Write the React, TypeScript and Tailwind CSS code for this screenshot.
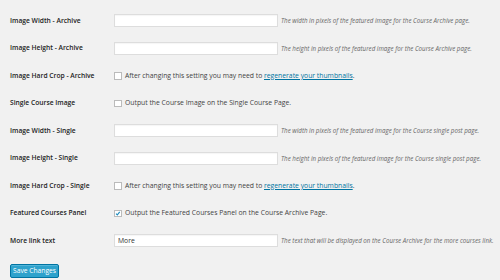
import { Fragment } from "react";

type Row =
    | { label: string; kind: "text"; value?: string; desc: string }
    | { label: string; kind: "check"; checked?: boolean; text: string; link?: boolean };

const rows: Row[] = [
    { label: "Image Width - Archive", kind: "text", desc: "The width in pixels of the featured image for the Course Archive page." },
    { label: "Image Height - Archive", kind: "text", desc: "The height in pixels of the featured image for the Course Archive page." },
    { label: "Image Hard Crop - Archive", kind: "check", text: "After changing this setting you may need to ", link: true },
    { label: "Single Course Image", kind: "check", text: "Output the Course Image on the Single Course Page." },
    { label: "Image Width - Single", kind: "text", desc: "The width in pixels of the featured image for the Course single post page." },
    { label: "Image Height - Single", kind: "text", desc: "The height in pixels of the featured image for the Course single post page." },
    { label: "Image Hard Crop - Single", kind: "check", text: "After changing this setting you may need to ", link: true },
    { label: "Featured Courses Panel", kind: "check", checked: true, text: "Output the Featured Courses Panel on the Course Archive Page." },
    { label: "More link text", kind: "text", value: "More", desc: "The text that will be displayed on the Course Archive for the more courses link." },
];

const App = () => {
    return (
        <div className="w-[500px] h-[280px] overflow-hidden bg-[#f1f1f1] pl-[10px] pt-[7px] font-['Open_Sans',sans-serif] text-[#444]">
            {rows.map((row) => (
                <div key={row.label} className="flex h-[27.5px] items-center">
                    <div className="w-[104px] shrink-0 text-[6.7px] font-semibold text-[#222]">{row.label}</div>
                    {row.kind === "text" ? (
                        <Fragment>
                            <div className="flex h-[13px] w-[164px] items-center border border-[#ddd] bg-white pl-[3px] text-[6.8px] text-[#333] shadow-[inset_0_1px_1px_rgba(0,0,0,0.04)]">
                                {row.value}
                            </div>
                            <span className="ml-[3px] text-[6.2px] italic text-[#666] whitespace-nowrap">{row.desc}</span>
                        </Fragment>
                    ) : (
                        <div className="flex items-center">
                            <div className="flex h-[7.5px] w-[7.5px] items-center justify-center border border-[#bbb] bg-white">
                                {row.checked && (
                                    <svg viewBox="0 0 10 10" className="h-[7px] w-[7px]">
                                        <path d="M1.8 5.2 L4.2 7.6 L8.6 2" fill="none" stroke="#1e8cbe" strokeWidth="2" />
                                    </svg>
                                )}
                            </div>
                            <span className="ml-[3.5px] text-[6.8px] text-[#444] whitespace-nowrap">
                                {row.text}
                                {row.link && (
                                    <>
                                        <a className="text-[#0074a2] underline">regenerate your thumbnails</a>.
                                    </>
                                )}
                            </span>
                        </div>
                    )}
                </div>
            ))}
            <button className="mt-[9.5px] h-[14px] w-[49px] rounded-[2px] border border-[#0074a2] bg-[#2ea2cc] text-[6.7px] text-white shadow-[inset_0_1px_0_rgba(120,200,230,0.5)]">
                Save Changes
            </button>
        </div>
    );
};

export default App;
